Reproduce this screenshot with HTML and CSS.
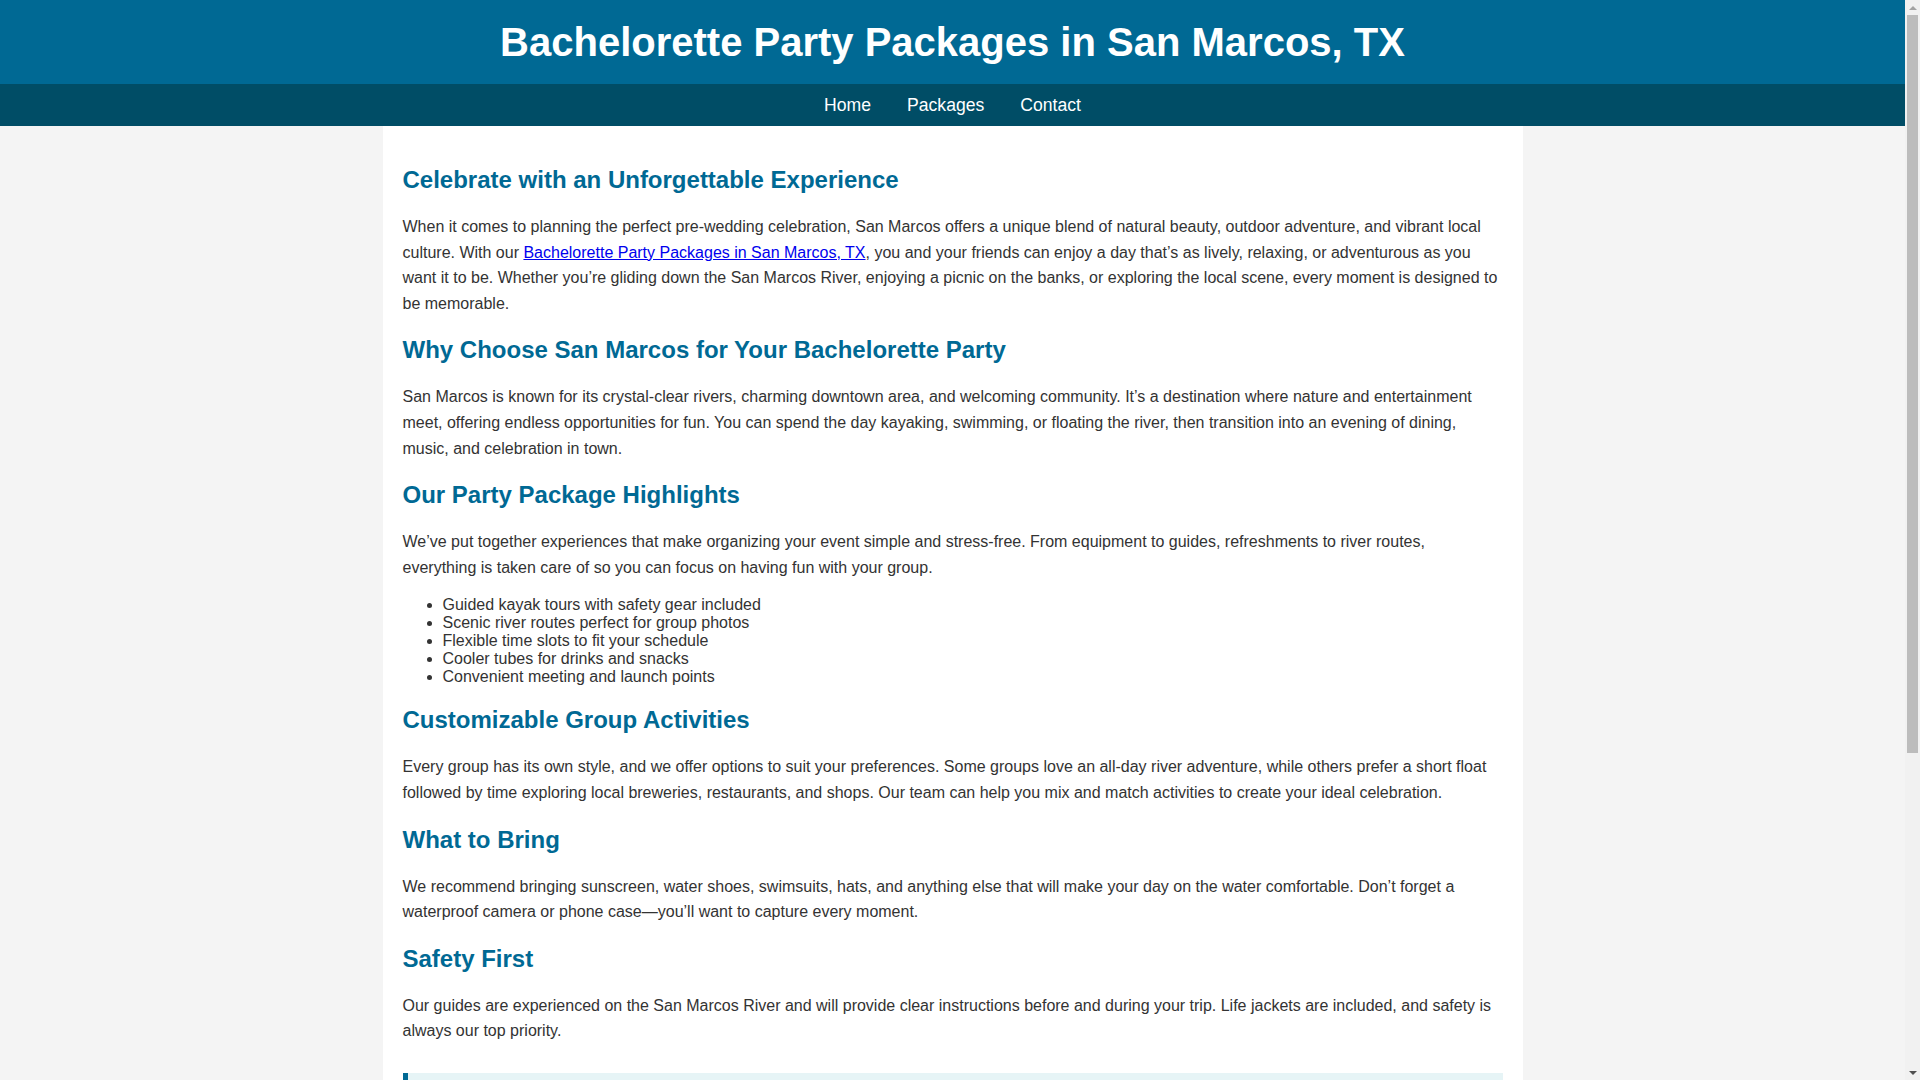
FILE: index.html
```
<!DOCTYPE html>
<html lang="en">
<head>
    <meta charset="UTF-8">
    <meta name="viewport" content="width=device-width, initial-scale=1.0">
    <title>Bachelorette Party Packages in San Marcos, TX</title>

    <link rel="stylesheet" href="styles.css">
</head>
<body>

    <!-- header section start -->

    <header>
        <h1>Bachelorette Party Packages in San Marcos, TX</h1>
    </header>

    <nav>
        <a href="#">Home</a>
        <a href="#">Packages</a>
        <a href="#">Contact</a>
    </nav>

    <!-- header section end -->

    <div class="container">

        <h2>Celebrate with an Unforgettable Experience</h2>
        <p>When it comes to planning the perfect pre-wedding celebration, San Marcos offers a unique blend of natural beauty, outdoor adventure, and vibrant local culture. With our <a href="#">Bachelorette Party Packages in San Marcos, TX</a>, you and your friends can enjoy a day that’s as lively, relaxing, or adventurous as you want it to be. Whether you’re gliding down the San Marcos River, enjoying a picnic on the banks, or exploring the local scene, every moment is designed to be memorable.</p>

        <h2>Why Choose San Marcos for Your Bachelorette Party</h2>
        <p>San Marcos is known for its crystal-clear rivers, charming downtown area, and welcoming community. It’s a destination where nature and entertainment meet, offering endless opportunities for fun. You can spend the day kayaking, swimming, or floating the river, then transition into an evening of dining, music, and celebration in town.</p>

        <h2>Our Party Package Highlights</h2>
        <p>We’ve put together experiences that make organizing your event simple and stress-free. From equipment to guides, refreshments to river routes, everything is taken care of so you can focus on having fun with your group.</p>
        <ul>
            <li>Guided kayak tours with safety gear included</li>
            <li>Scenic river routes perfect for group photos</li>
            <li>Flexible time slots to fit your schedule</li>
            <li>Cooler tubes for drinks and snacks</li>
            <li>Convenient meeting and launch points</li>
        </ul>

        <h2>Customizable Group Activities</h2>
        <p>Every group has its own style, and we offer options to suit your preferences. Some groups love an all-day river adventure, while others prefer a short float followed by time exploring local breweries, restaurants, and shops. Our team can help you mix and match activities to create your ideal celebration.</p>

        <h2>What to Bring</h2>
        <p>We recommend bringing sunscreen, water shoes, swimsuits, hats, and anything else that will make your day on the water comfortable. Don’t forget a waterproof camera or phone case—you’ll want to capture every moment.</p>

        <h2>Safety First</h2>
        <p>Our guides are experienced on the San Marcos River and will provide clear instructions before and during your trip. Life jackets are included, and safety is always our top priority.</p>

        <div class="cta">
            <h3>Ready to Plan Your Celebration?</h3>
            <p>Reach out today to reserve your date and start planning a bachelorette party your group will talk about for years. Spots fill quickly during the warmer months, so book early.</p>
        </div>

        <h2>Book Your Adventure</h2>
        <p>Contact our team to check availability, ask questions about group sizes, or customize a package that fits your plans. We look forward to helping you celebrate on the river.</p>
        <p>Whether you want a laid-back float or a full day of adventure, we’ll help you put together a bachelorette party that feels just right for the bride and her crew. Gather your friends, grab your sunscreen, and get ready for a day on the water.</p>
    </div>

    <footer>
        <p>&copy; 2025 Bachelorette Party Packages in San Marcos, TX. All rights reserved.</p>
    </footer>

    <!-- window scrollbar -->
    <div class="scrollbar">
        <span class="arrow up"></span>
        <span class="thumb"></span>
        <span class="track"></span>
        <span class="arrow down"></span>
    </div>

</body>
</html>
```

FILE: styles.css
```
* {
  box-sizing: border-box;
}

body {
  margin: 0 15px 0 0;
  font-family: "Liberation Sans", Arial, sans-serif;
  background-color: #f4f4f4;
  color: #333;
}

header {
  background-color: #006994;
  color: white;
  text-align: center;
  padding: 19px 0;

  h1 {
      margin: 0;
      font-size: 40px;
      line-height: 46px;
  }
}

nav {
  background-color: #004d66;
  display: flex;
  justify-content: center;
  gap: 36px;
  padding: 11px 0;

  a {
      color: white;
      text-decoration: none;
      font-size: 17.6px;
      line-height: 20px;
  }
}

.container {
  max-width: 1140px;
  margin: 0 auto;
  background-color: white;
  padding: 20px;

  h2 {
      color: #006994;
      font-size: 24px;
      margin: 20px 0;
  }

  p {
      line-height: 1.6;
      margin: 16px 0;
  }

  a {
      color: #0000ee;
  }

  ul {
      margin: 16px 0;
      padding-left: 40px;
  }
}

.cta {
  background-color: #e6f4f6;
  border-left: 5px solid #006994;
  padding: 20px;
  margin: 29px 0 20px;

  h3 {
      margin: 0 0 10px;
      color: #006994;
      font-size: 20px;
  }

  p {
      margin: 0;
  }
}

footer {
  background-color: #004d66;
  color: white;
  text-align: center;
  padding: 30px 20px;
  margin-top: 20px;

  p {
      margin: 0;
  }
}

.scrollbar {
  position: fixed;
  top: 0;
  right: 0;
  width: 15px;
  height: 100vh;
  background-color: #f1f1f1;
  display: flex;
  flex-direction: column;

  .arrow {
      height: 15px;
      display: flex;
      justify-content: center;
      align-items: center;
  }

  .arrow::before {
      content: "";
      border-left: 4px solid transparent;
      border-right: 4px solid transparent;
  }

  .up::before {
      border-bottom: 4px solid #a3a3a3;
  }

  .down::before {
      border-top: 4px solid #505050;
  }

  .thumb {
      height: 738px;
      margin: 0 2px;
      background-color: #bcbcbc;
  }

  .track {
      flex: 1;
  }
}
```
